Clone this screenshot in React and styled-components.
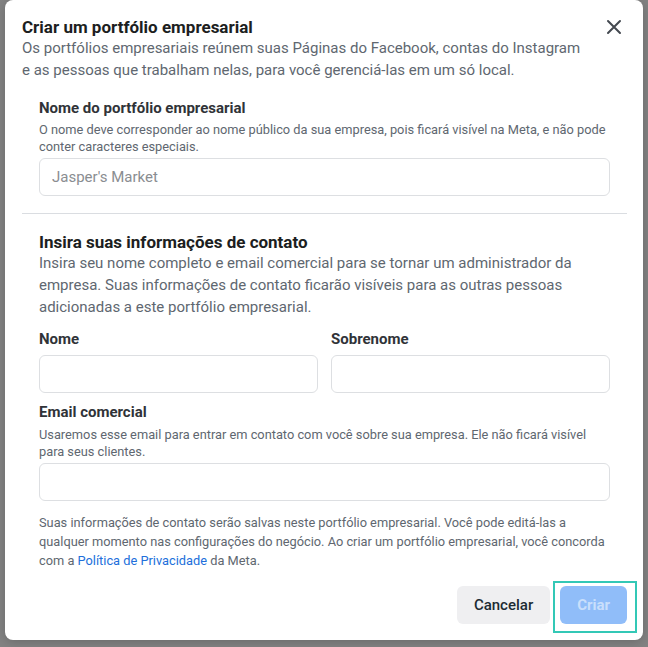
import React from "react";
import styled, { createGlobalStyle } from "styled-components";

const GlobalStyle = createGlobalStyle`
  html, body {
    margin: 0;
    padding: 0;
  }
  body {
    font-family: Roboto, "Liberation Sans", Arial, sans-serif;
    background: #838383;
  }
`;

const Backdrop = styled.div`
  min-height: 647px;
  box-sizing: border-box;
  padding: 0 5px 7px 5px;
  background: #838383;
`;

const Dialog = styled.div`
  background: #fff;
  border-radius: 8px;
  padding: 17px 16px 16px 17px;
  box-shadow: 0 2px 12px rgba(0, 0, 0, 0.2);
`;

const Header = styled.div`
  display: flex;
  align-items: flex-start;
  justify-content: space-between;
`;

const HeaderText = styled.div`
  max-width: 565px;
`;

const Title = styled.h1`
  margin: 0;
  font-size: 17px;
  line-height: 20px;
  font-weight: 700;
  color: #1c1e21;
`;

const Lead = styled.p`
  margin: 0;
  font-size: 15px;
  line-height: 22px;
  color: #606770;
`;

const CloseButton = styled.button`
  width: 24px;
  height: 24px;
  margin: -2px 1px 0 0;
  padding: 0;
  border: none;
  background: transparent;
  display: flex;
  align-items: center;
  justify-content: center;
  cursor: pointer;
  color: #444950;
`;

const Section = styled.section`
  padding: 0 17px;
  margin-top: ${(p) => p.$top || 0}px;
`;

const SectionTitle = styled.h2`
  margin: 0;
  font-size: 17px;
  line-height: 20px;
  font-weight: 700;
  color: #1c1e21;
`;

const Label = styled.label`
  display: block;
  font-size: 15px;
  line-height: 20px;
  font-weight: 700;
  color: #303338;
  margin-top: ${(p) => p.$top || 0}px;
`;

const Hint = styled.p`
  margin: ${(p) => p.$top || 3}px 0 0;
  font-size: 12.8px;
  line-height: 17px;
  color: #606770;
`;

const Input = styled.input`
  display: block;
  width: 100%;
  box-sizing: border-box;
  height: 38px;
  margin-top: ${(p) => p.$top || 5}px;
  padding: 0 12px;
  border: 1px solid #dddfe2;
  border-radius: 6px;
  font-family: inherit;
  font-size: 15px;
  color: #1c1e21;
  outline: none;

  &::placeholder {
    color: #8a8d91;
  }
`;

const Divider = styled.hr`
  margin: 17px 0 0;
  border: none;
  border-top: 1px solid #dadde1;
`;

const NameRow = styled.div`
  display: grid;
  grid-template-columns: 1fr 1fr;
  column-gap: 13px;
  margin-top: 11px;
`;

const Notice = styled.p`
  margin: 12px 0 0;
  font-size: 12.8px;
  line-height: 19px;
  color: #606770;
`;

const Link = styled.a`
  color: #216fdb;
  text-decoration: none;
`;

const Footer = styled.div`
  display: flex;
  justify-content: flex-end;
  gap: 10px;
  margin-top: 16px;
`;

const Button = styled.button`
  height: 38px;
  padding: 0 17px;
  border: none;
  border-radius: 6px;
  font-family: inherit;
  font-size: 15px;
  font-weight: ${(p) => (p.$primary ? 700 : 500)};
  background: ${(p) => (p.$primary ? "#90bdf9" : "#efeff1")};
  color: ${(p) => (p.$primary ? "#c9dffc" : "#1c2b33")};
  cursor: ${(p) => (p.$primary ? "default" : "pointer")};
`;

const Focus = styled.span`
  position: relative;
  display: inline-flex;
`;

const FocusRing = styled.span`
  position: absolute;
  top: -5px;
  left: -7px;
  right: -10px;
  bottom: -9px;
  border: 2.5px solid #33c8b6;
  pointer-events: none;
`;

function CloseIcon() {
  return (
    <svg width="16" height="16" viewBox="0 0 16 16" fill="none">
      <path d="M2 2L14 14M14 2L2 14" stroke="currentColor" strokeWidth="2" strokeLinecap="round" />
    </svg>
  );
}

export default function App() {
  return (
    <>
      <GlobalStyle />
      <Backdrop>
        <Dialog>
          <Header>
            <HeaderText>
              <Title>Criar um portfólio empresarial</Title>
              <Lead>
                Os portfólios empresariais reúnem suas Páginas do Facebook, contas do Instagram e as
                pessoas que trabalham nelas, para você gerenciá-las em um só local.
              </Lead>
            </HeaderText>
            <CloseButton aria-label="Fechar">
              <CloseIcon />
            </CloseButton>
          </Header>

          <Section $top={17}>
            <Label>Nome do portfólio empresarial</Label>
            <Hint>
              O nome deve corresponder ao nome público da sua empresa, pois ficará visível na Meta, e
              não pode conter caracteres especiais.
            </Hint>
            <Input placeholder="Jasper's Market" $top={3} />
          </Section>

          <Divider />

          <Section $top={18}>
            <SectionTitle>Insira suas informações de contato</SectionTitle>
            <Lead>
              Insira seu nome completo e email comercial para se tornar um administrador da empresa.
              Suas informações de contato ficarão visíveis para as outras pessoas adicionadas a este
              portfólio empresarial.
            </Lead>

            <NameRow>
              <div>
                <Label>Nome</Label>
                <Input $top={6} />
              </div>
              <div>
                <Label>Sobrenome</Label>
                <Input $top={6} />
              </div>
            </NameRow>

            <Label $top={9}>Email comercial</Label>
            <Hint $top={4}>
              Usaremos esse email para entrar em contato com você sobre sua empresa. Ele não ficará
              visível para seus clientes.
            </Hint>
            <Input $top={3} />

            <Notice>
              Suas informações de contato serão salvas neste portfólio empresarial. Você pode
              editá-las a qualquer momento nas configurações do negócio. Ao criar um portfólio
              empresarial, você concorda com a <Link href="#">Política de Privacidade</Link> da Meta.
            </Notice>
          </Section>

          <Footer>
            <Button>Cancelar</Button>
            <Focus>
              <Button $primary disabled>
                Criar
              </Button>
              <FocusRing />
            </Focus>
          </Footer>
        </Dialog>
      </Backdrop>
    </>
  );
}
